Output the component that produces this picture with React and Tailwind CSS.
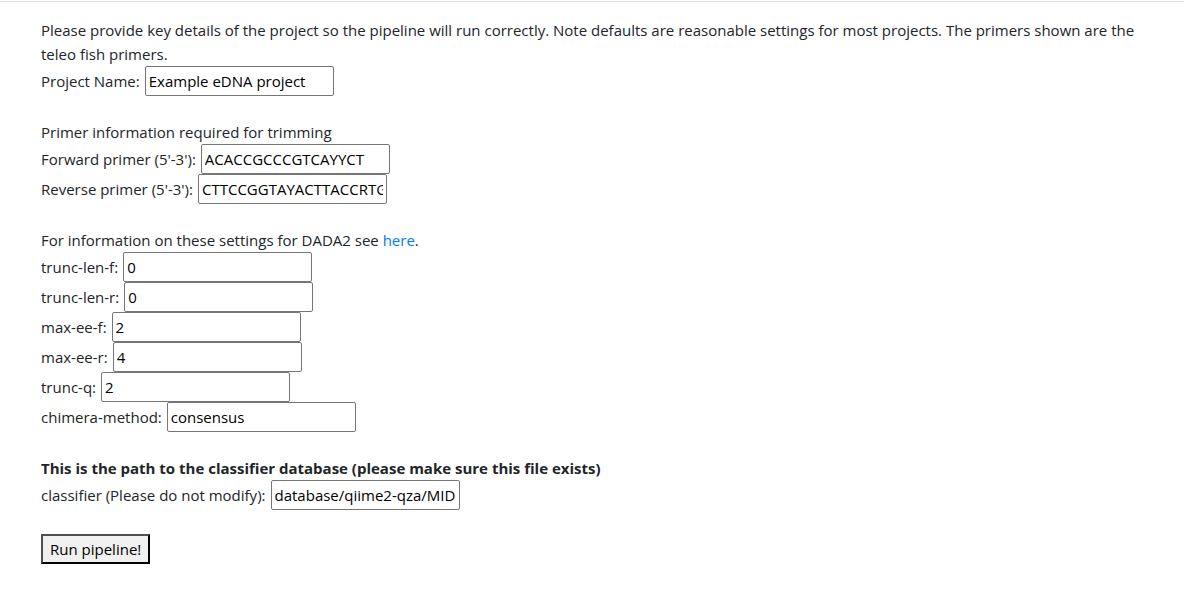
import React, { useState } from "react";

const fields = [
  { name: "trunc-len-f", value: "0" },
  { name: "trunc-len-r", value: "0" },
  { name: "max-ee-f", value: "2" },
  { name: "max-ee-r", value: "4" },
  { name: "trunc-q", value: "2" },
  { name: "chimera-method", value: "consensus" },
];

function Row({ label, value, onChange }) {
  return (
    <div className="flex h-[30px] items-center">
      <span>{label}:</span>
      <input
        type="text"
        value={value}
        onChange={onChange}
        className="ml-[5px] h-[30px] w-[189px] rounded-[2px] border border-[#767676] bg-white px-[3px] text-black outline-none"
      />
    </div>
  );
}

export default function App() {
  const [form, setForm] = useState({
    project: "Example eDNA project",
    fwd: "ACACCGCCCGTCAYYCT",
    rev: "CTTCCGGTAYACTTACCRTG",
    classifier: "database/qiime2-qza/MIDORI_fish.qza",
    ...Object.fromEntries(fields.map((f) => [f.name, f.value])),
  });

  const set = (key) => (e) => setForm((prev) => ({ ...prev, [key]: e.target.value }));

  return (
    <div className="min-h-[599px] bg-white font-['Open_Sans',sans-serif] text-[15px] leading-6 text-[#212529]">
      <div className="h-px mt-px bg-[#e3e3e3]" />
      <div className="px-[41px] pt-[16px]">
        <p>
          Please provide key details of the project so the pipeline will run correctly. Note defaults are reasonable
          settings for most projects. The primers shown are the
          <br />
          teleo fish primers.
        </p>
        <Row label="Project Name" value={form.project} onChange={set("project")} />
        <div className="h-6" />

        <p>Primer information required for trimming</p>
        <Row label="Forward primer (5'-3')" value={form.fwd} onChange={set("fwd")} />
        <Row label="Reverse primer (5'-3')" value={form.rev} onChange={set("rev")} />
        <div className="h-6" />

        <p>
          For information on these settings for DADA2 see{" "}
          <a href="#" className="text-[#007bff]">
            here
          </a>
          .
        </p>
        {fields.map((f) => (
          <Row key={f.name} label={f.name} value={form[f.name]} onChange={set(f.name)} />
        ))}
        <div className="h-6" />

        <p className="font-bold">This is the path to the classifier database (please make sure this file exists)</p>
        <Row label="classifier (Please do not modify)" value={form.classifier} onChange={set("classifier")} />
        <div className="h-6" />

        <button
          type="button"
          className="h-[30px] border-2 border-[#505050] border-b-black border-r-black bg-[#f0f0f0] px-[7px] text-black"
        >
          Run pipeline!
        </button>
      </div>
    </div>
  );
}
